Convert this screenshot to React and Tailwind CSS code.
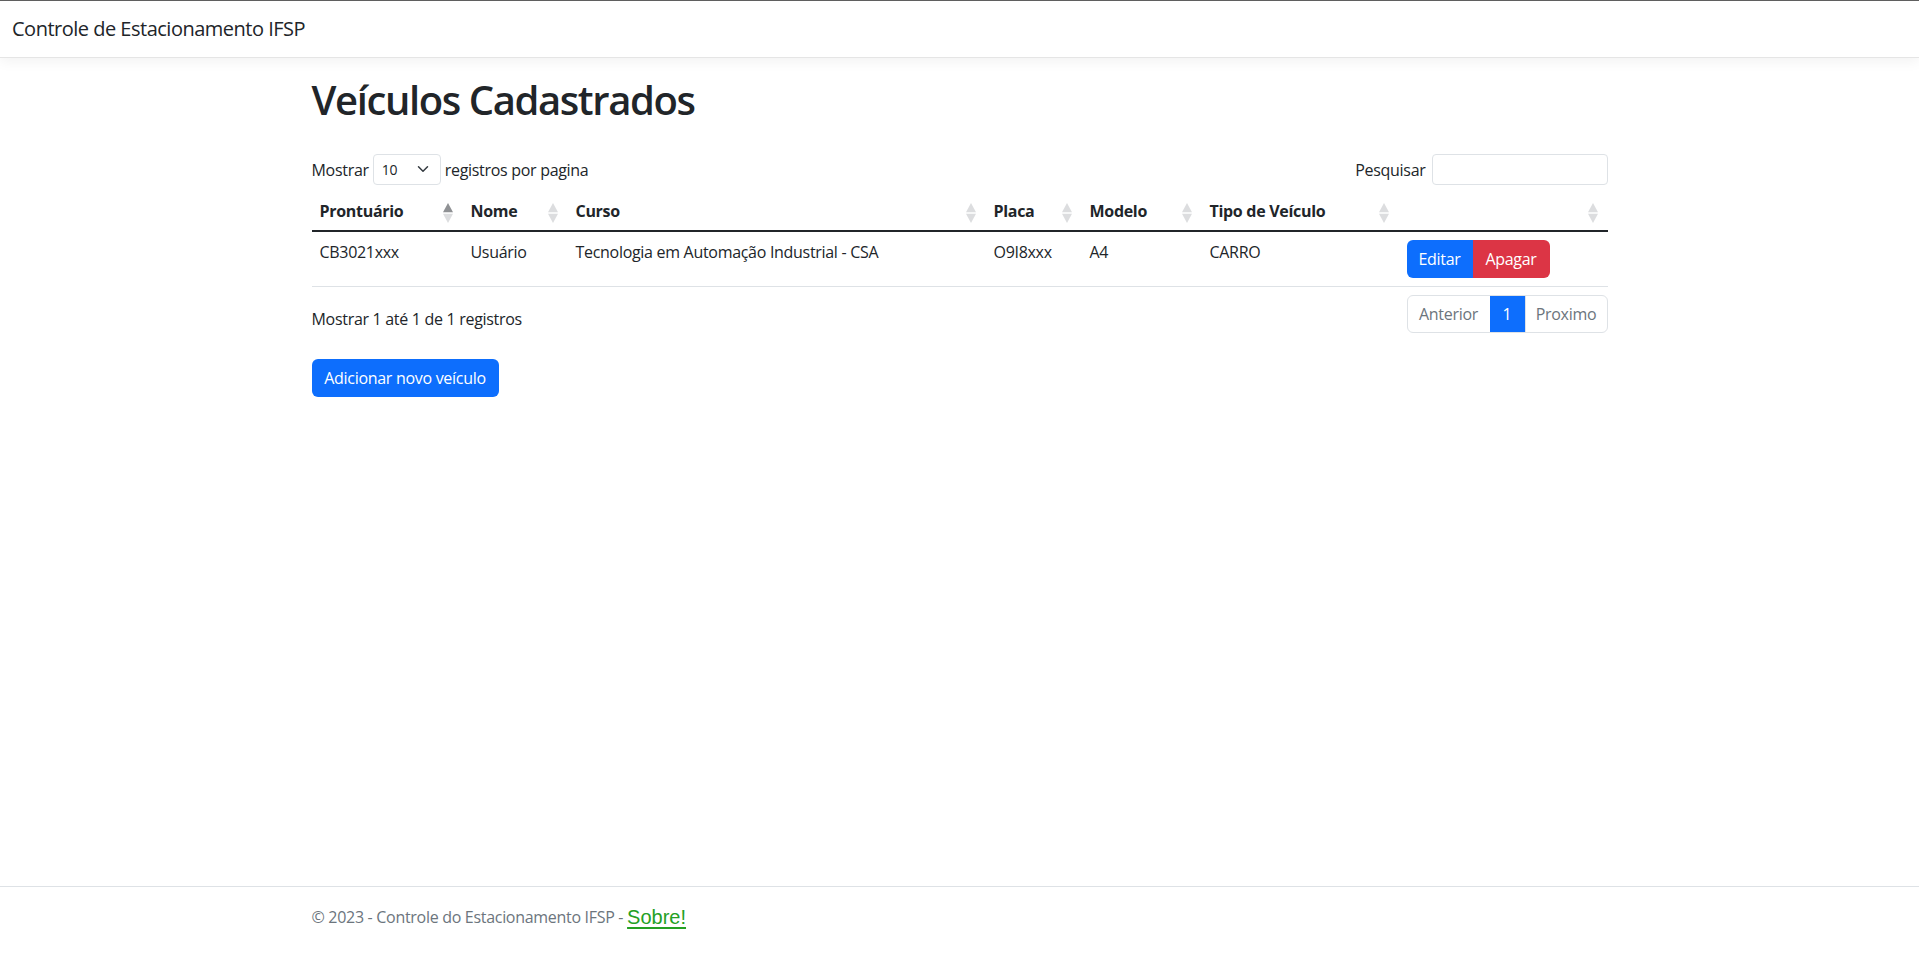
import React, { useState } from 'react';

const veiculos = [
  {
    id: 1,
    prontuario: 'CB3021xxx',
    nome: 'Usuário',
    curso: 'Tecnologia em Automação Industrial - CSA',
    placa: 'O9I8xxx',
    modelo: 'A4',
    tipo: 'CARRO',
  },
];

const colunas = [
  { key: 'prontuario', label: 'Prontuário', width: 'w-[151px]' },
  { key: 'nome', label: 'Nome', width: 'w-[105px]' },
  { key: 'curso', label: 'Curso', width: 'w-[418px]' },
  { key: 'placa', label: 'Placa', width: 'w-[96px]' },
  { key: 'modelo', label: 'Modelo', width: 'w-[120px]' },
  { key: 'tipo', label: 'Tipo de Veículo', width: 'w-[197px]' },
  { key: 'acoes', label: '', width: 'w-[209px]' },
];

// setinhas de ordenação estilo DataTables
const SortIcon = ({ active }) => (
  <svg width="10" height="20" viewBox="0 0 10 20" className="absolute right-[10px] top-[12px]">
    <path d="M5 0 L10 9.3 L0 9.3 Z" fill={active ? '#8f9194' : '#dcdddf'} />
    <path d="M5 20 L10 10.7 L0 10.7 Z" fill="#dcdddf" />
  </svg>
);

const Chevron = () => (
  <svg width="12" height="12" viewBox="0 0 16 16" className="absolute right-[12px] top-[9px]">
    <path d="M2 5l6 6 6-6" fill="none" stroke="#343a40" strokeWidth="2" strokeLinecap="round" strokeLinejoin="round" />
  </svg>
);

const td = 'align-top px-[8px] py-[8px] leading-[24px]';

export default function App() {
  const [qtd, setQtd] = useState('10');
  const [busca, setBusca] = useState('');

  return (
    <div className="min-h-screen flex flex-col bg-white text-[#212529] font-['Open_Sans',sans-serif] text-[16px] tracking-[-0.3px] pb-[17px]">
      {/* Navbar */}
      <header className="border-t border-t-[#5f5f5f] border-b border-b-[#e5e5e5] bg-white shadow-[0_4px_12px_rgba(0,0,0,0.05)] h-[58px] flex items-center px-[12px]">
        <a className="text-[20px] leading-[30px] text-[#212529] tracking-[-0.5px]">Controle de Estacionamento IFSP</a>
      </header>

      <main className="flex-1 w-[1320px] mx-auto px-[12px] pt-[18px]">
        <h1 className="text-[40px] leading-[48px] font-semibold tracking-[-1.4px] mb-[30px]">Veículos Cadastrados</h1>

        {/* controles */}
        <div className="flex items-center justify-between h-[31px]">
          <div className="flex items-center">
            <span>Mostrar</span>
            <div className="relative mx-[4px]">
              <select
                value={qtd}
                onChange={(e) => setQtd(e.target.value)}
                className="appearance-none w-[68px] h-[31px] border border-[#dee2e6] rounded-[4px] pl-[8px] text-[14px] bg-white outline-none"
              >
                <option>10</option>
                <option>25</option>
                <option>50</option>
                <option>100</option>
              </select>
              <Chevron />
            </div>
            <span>registros por pagina</span>
          </div>
          <label className="flex items-center">
            <span className="mr-[6px]">Pesquisar</span>
            <input
              value={busca}
              onChange={(e) => setBusca(e.target.value)}
              className="w-[176px] h-[31px] border border-[#dee2e6] rounded-[4px] px-[8px] text-[14px] outline-none"
            />
          </label>
        </div>

        {/* tabela */}
        <table className="w-full mt-[6px] border-collapse table-fixed">
          <thead>
            <tr className="border-b-2 border-b-[#212529]">
              {colunas.map((c, i) => (
                <th key={c.key} className={`${c.width} relative text-left font-bold leading-[24px] px-[8px] pt-[8px] pb-[7px]`}>
                  {c.label}
                  <SortIcon active={i === 0} />
                </th>
              ))}
            </tr>
          </thead>
          <tbody>
            {veiculos.map((v) => (
              <tr key={v.id} className="border-b border-b-[#dee2e6]">
                <td className={td}>{v.prontuario}</td>
                <td className={td}>{v.nome}</td>
                <td className={td}>{v.curso}</td>
                <td className={td}>{v.placa}</td>
                <td className={td}>{v.modelo}</td>
                <td className={td}>{v.tipo}</td>
                <td className="align-top px-[8px] py-[8px]">
                  <div className="flex">
                    <button className="h-[38px] w-[66px] bg-[#0d6efd] text-white rounded-l-[6px]">Editar</button>
                    <button className="h-[38px] w-[77px] bg-[#dc3545] text-white rounded-r-[6px]">Apagar</button>
                  </div>
                </td>
              </tr>
            ))}
          </tbody>
        </table>

        {/* info + paginação */}
        <div className="flex justify-between items-start mt-[8px]">
          <div className="leading-[24px] pt-[12px]">Mostrar 1 até 1 de 1 registros</div>
          <nav className="flex h-[38px] border border-[#dee2e6] rounded-[6px] overflow-hidden">
            <span className="w-[82px] flex items-center justify-center text-[#6c757d]">Anterior</span>
            <span className="w-[35px] flex items-center justify-center bg-[#0d6efd] text-white">1</span>
            <span className="w-[82px] flex items-center justify-center text-[#6c757d] border-l border-l-[#dee2e6]">Proximo</span>
          </nav>
        </div>

        <button className="mt-[26px] h-[38px] w-[187px] bg-[#0d6efd] text-white rounded-[6px]">
          Adicionar novo veículo
        </button>
      </main>

      {/* rodapé */}
      <footer className="border-t border-t-[#dee2e6] h-[61px]">
        <div className="w-[1320px] mx-auto px-[12px] h-[60px] flex items-center text-[#6c757d]">
          <span>© 2023 - Controle do Estacionamento IFSP -&nbsp;</span>
          <a className="text-[#24a024] underline underline-offset-[3px] text-[20px] font-['Liberation_Sans',Arial,sans-serif] tracking-normal">Sobre!</a>
        </div>
      </footer>
    </div>
  );
}
